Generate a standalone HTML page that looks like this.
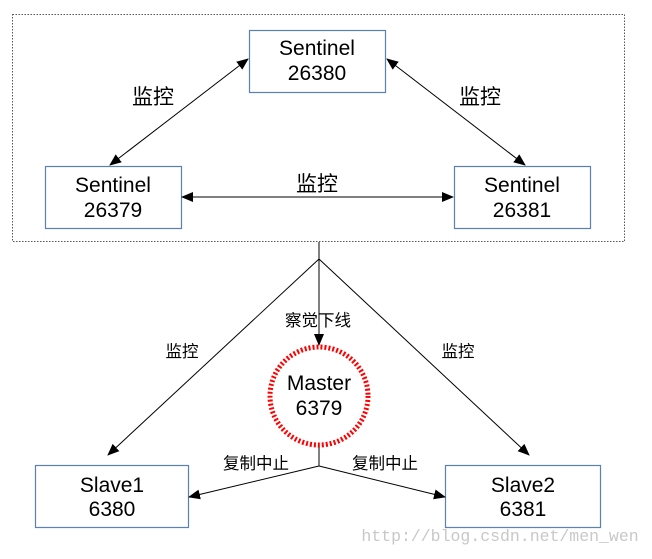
<!DOCTYPE html>
<html><head><meta charset="utf-8"><style>
html,body{margin:0;padding:0;background:#fff}
text{font-family:"Liberation Sans","Noto Sans CJK SC",sans-serif;fill:#000}
</style></head><body>
<svg width="652" height="554" viewBox="0 0 652 554" xmlns="http://www.w3.org/2000/svg">
<defs>
<marker id="a" markerWidth="12" markerHeight="10" refX="11" refY="5" orient="auto" markerUnits="userSpaceOnUse">
<path d="M0,0 L12,5 L0,10 Z" fill="#000"/></marker>
<marker id="b" markerWidth="12" markerHeight="10" refX="11" refY="5" orient="auto-start-reverse" markerUnits="userSpaceOnUse">
<path d="M0,0 L12,5 L0,10 Z" fill="#000"/></marker>
</defs>
<rect x="12.5" y="14.5" width="612" height="227" fill="none" stroke="#555" stroke-dasharray="1.5,1.5"/>
<g fill="#fff" stroke="#5b80b2" stroke-width="1.2">
<rect x="249.5" y="30.5" width="136" height="62"/>
<rect x="45.5" y="166.5" width="136" height="62"/>
<rect x="454.5" y="166.5" width="136" height="62"/>
<rect x="35.5" y="465.5" width="153" height="62"/>
<rect x="445.5" y="465.5" width="155" height="62"/>
</g>
<g stroke="#000" stroke-width="1" fill="none">
<line x1="248" y1="59" x2="110" y2="165" marker-start="url(#b)" marker-end="url(#a)"/>
<line x1="387" y1="59" x2="525" y2="165" marker-start="url(#b)" marker-end="url(#a)"/>
<line x1="182" y1="197" x2="453" y2="197" marker-start="url(#b)" marker-end="url(#a)"/>
<line x1="319" y1="242" x2="319" y2="259"/>
<line x1="319" y1="259" x2="319" y2="345" marker-end="url(#a)"/>
<line x1="319" y1="259" x2="108" y2="455" marker-end="url(#a)"/>
<line x1="319" y1="259" x2="529" y2="455" marker-end="url(#a)"/>
<line x1="319" y1="446" x2="319" y2="466"/>
<line x1="319" y1="466" x2="189" y2="497" marker-end="url(#a)"/>
<line x1="319" y1="466" x2="445" y2="497" marker-end="url(#a)"/>
</g>
<circle cx="319" cy="396" r="49" fill="#fff" stroke="#f00" stroke-width="5" stroke-dasharray="2,2"/>
<g font-size="21" text-anchor="middle">
<text x="317" y="55">Sentinel</text><text x="317" y="80">26380</text>
<text x="113" y="192">Sentinel</text><text x="113" y="217">26379</text>
<text x="522" y="192">Sentinel</text><text x="522" y="217">26381</text>
<text x="319" y="390">Master</text><text x="319" y="415">6379</text>
<text x="112" y="492">Slave1</text><text x="112" y="516">6380</text>
<text x="523" y="492">Slave2</text><text x="523" y="516">6381</text>
<text x="153" y="104">监控</text><text x="480" y="104">监控</text><text x="317" y="191">监控</text>
</g>
<g font-size="16.5" text-anchor="middle">
<text x="318" y="326">察觉下线</text>
<text x="182" y="357">监控</text><text x="458" y="357">监控</text>
<text x="256" y="469">复制中止</text><text x="385" y="469">复制中止</text>
</g>
<text x="500" y="541" font-size="16.5" text-anchor="middle" style="font-family:'Liberation Mono',monospace;fill:#c8c8c8">http://blog.csdn.net/men_wen</text>
</svg>
</body></html>
